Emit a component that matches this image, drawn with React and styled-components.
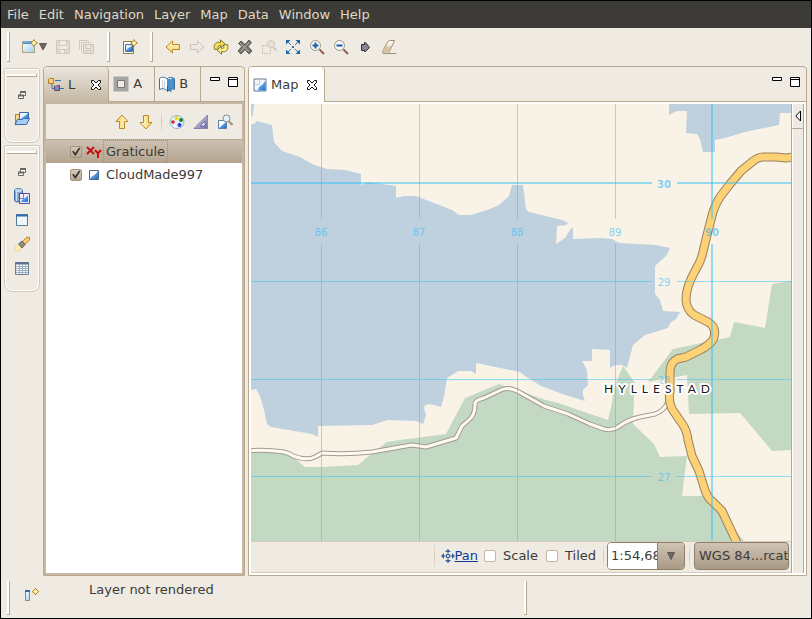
import React from "react";
import styled, { createGlobalStyle } from "styled-components";

const Global = createGlobalStyle`
  *, *::before, *::after { box-sizing: border-box; }
  body { margin: 0; background: #000; }
  button, input { font: inherit; color: inherit; }
  button { border: 0; padding: 0; background: none; }
  svg { display: block; flex: none; }
`;

const line = "#b8a88f";
const frame = "#c5b7a4";
const paper = "#efebe3";

/* ---------- window ---------- */
const Window = styled.div`
  min-height: 100vh;
  display: grid;
  grid-template-rows: 27px 38px 1fr 39px;
  border: 1px solid #000;
  background: ${paper};
  color: #3c3b37;
  font: 13px/16px "DejaVu Sans", sans-serif;
`;
const MenuBar = styled.nav`
  display: flex;
  align-items: center;
  gap: 10px;
  padding: 0 6px;
  background: #3c3b37;
  color: #dfd8c8;
`;
const MenuItem = styled.button``;
const ToolBar = styled.div`
  display: flex;
  align-items: center;
  padding-left: 6px;
`;
const Grip = styled.div`
  width: 3px;
  height: ${(p) => p.$h || 30}px;
  border: solid ${line};
  border-width: 0 1px 1px 0;
  background: linear-gradient(90deg, #fff 2px, ${paper} 2px);
`;
const ToolGroup = styled.div`
  display: flex;
  padding: 0 8px;
`;
const ToolButton = styled.button`
  min-width: 24px;
  height: 24px;
  display: flex;
  align-items: center;
  justify-content: center;
  gap: 1px;
`;
const WideToolButton = styled(ToolButton)`
  width: 33px;
`;
const Workbench = styled.main`
  display: flex;
  gap: 3px;
  padding: 0 4px 3px 3px;
  min-height: 0;
`;
const Trim = styled.aside`
  flex: 0 0 36px;
  display: flex;
  flex-direction: column;
  gap: 2px;
  padding-top: 2px;
`;
const TrimStack = styled.div`
  display: flex;
  flex-direction: column;
  align-items: center;
  padding: 5px 2px 11px;
  border: 1px solid #d3c9b8;
  border-radius: 2px 2px 8px 8px;
  box-shadow: inset 0 0 0 1px #fff;
`;
const TrimHandle = styled.div`
  width: 30px;
  height: 3px;
  margin-bottom: 6px;
  border: solid ${line};
  border-width: 0 1px 1px 0;
  background: #fff;
`;

/* ---------- panels ---------- */
const Panel = styled.section`
  flex: ${(p) => (p.$grow ? "1 1 0" : "0 0 202px")};
  min-width: 0;
  display: flex;
  flex-direction: column;
  border: 1px solid ${line};
  border-radius: 4px 4px 0 0;
`;
const TabStrip = styled.header`
  height: 35px;
  display: flex;
  flex: none;
  border-bottom: 1px solid ${line};
`;
const Tab = styled.div`
  display: flex;
  align-items: center;
  gap: ${(p) => p.$gap || 0}px;
  padding: 0 ${(p) => p.$right || 12}px 0 4px;
  border-right: 1px solid ${line};
  ${(p) =>
    p.$fill &&
    `margin-bottom: -1px; background: ${p.$fill}; border-radius: 3px 4px 0 0;`}
`;
const TabButton = styled.button`
  display: flex;
  align-items: center;
  gap: 4px;
`;
const WindowButtons = styled.div`
  margin-left: auto;
  display: flex;
  gap: 8px;
  padding: 9px 6px 0 0;
  align-items: flex-start;
`;
const PanelBody = styled.div`
  flex: 1;
  min-height: 0;
  display: flex;
  flex-direction: ${(p) => (p.$row ? "row" : "column")};
  border: 2px solid ${(p) => p.$edge};
  background: #fff;
`;
const ViewToolBar = styled.div`
  height: 35px;
  flex: none;
  display: flex;
  align-items: center;
  justify-content: flex-end;
  padding-right: 5px;
  background: ${paper};
`;
const Divider = styled.div`
  width: 1px;
  height: ${(p) => p.$h || 20}px;
  margin: 0 ${(p) => p.$gap || 3}px;
  background: linear-gradient(#e9e3d9, #d0c6b7, #e9e3d9);
`;
const LayerList = styled.ul`
  list-style: none;
  margin: 0;
  padding: 0;
  border-top: 1px solid ${line};
`;
const LayerRow = styled.li`
  height: 23px;
  display: flex;
  align-items: center;
  gap: 4px;
  padding-left: 24px;
  background: ${(p) => (p.$selected ? "linear-gradient(#cdc1b2, #b3a48f)" : "#fff")};
`;
const LayerLabel = styled.label`
  height: 100%;
  display: flex;
  align-items: center;
  padding: 0 2px;
  margin-left: -3px;
  border: 1px dotted ${(p) => (p.$selected ? "#f5694e" : "transparent")};
`;
const Check = styled.input`
  appearance: none;
  width: 12px;
  height: 12px;
  margin: 0;
  flex: none;
  border: 1px solid #c3b7a6;
  border-radius: 2px;
  background: #fff;
  display: grid;
  &:checked {
    border-color: #a3937d;
    background: linear-gradient(#d6cabb, #b6a793);
  }
  &:checked::after {
    content: "";
    background: #353430;
    clip-path: polygon(12% 50%, 24% 42%, 42% 66%, 80% 10%, 94% 18%, 48% 90%, 38% 90%);
  }
`;

/* ---------- map ---------- */
const MapColumn = styled.div`
  flex: 1;
  min-width: 0;
  display: flex;
  flex-direction: column;
`;
const MapView = styled.div`
  flex: 1;
  min-height: 0;
  overflow: hidden;
  background: #f8f3e6;
  contain: size;
`;
const Palette = styled.div`
  flex: 0 0 13px;
  background: ${paper};
  border: solid ${line};
  border-width: 0 1px;
  box-shadow: inset 1px 0 #fff;
`;
const PaletteButton = styled.button`
  width: 100%;
  height: 25px;
  display: grid;
  place-items: center;
  border-bottom: 1px solid ${line};
`;
const MapFooter = styled.div`
  height: 32px;
  flex: none;
  display: flex;
  align-items: center;
  justify-content: flex-end;
  padding: 0 2px 2px 0;
  background: ${paper};
  border: solid #d5cbbb;
  border-width: 1px 0;
`;
const PanLink = styled.a`
  display: flex;
  align-items: center;
  margin-right: 6px;
  color: #0a3c9c;
`;
const Option = styled.label`
  display: flex;
  align-items: center;
  gap: 7px;
  margin-right: ${(p) => p.$right}px;
`;
const Combo = styled.div`
  width: 78px;
  height: 28px;
  display: flex;
  flex: none;
  overflow: hidden;
  border: 1px solid #8f806c;
  border-radius: 4px;
`;
const ComboField = styled.input`
  width: 49px;
  border: 0;
  outline: 0;
  padding: 0 0 0 3px;
  background: #fff;
`;
const ComboArrow = styled.button`
  flex: 1;
  display: grid;
  place-items: center;
  border-left: 1px solid #8f806c;
  background: linear-gradient(#cfc3b4, #a99a86);
`;
const CrsButton = styled.button`
  width: 95px;
  height: 28px;
  flex: none;
  display: flex;
  align-items: center;
  padding: 0 0 0 4px;
  border: 1px solid #8f806c;
  border-radius: 4px;
  background: linear-gradient(#cfc3b4, #a99a86);
`;
const CrsText = styled.span`
  overflow: hidden;
  white-space: nowrap;
`;

/* ---------- status ---------- */
const StatusBar = styled.footer`
  display: flex;
  align-items: flex-start;
  padding: 2px 6px;
`;
const StatusButton = styled.button`
  padding: 6px 14px 0;
`;
const StatusText = styled.output`
  flex: 0 0 470px;
  padding: 1px 0 0 35px;
`;

/* ---------- icons ---------- */
const Svg = ({ w = 16, h = 16, children }) => (
  <svg width={w} height={h} viewBox={`0 0 ${w} ${h}`} fill="none" aria-hidden="true">
    {children}
  </svg>
);
const Spark = ({ x, y }) => (
  <path
    transform={`translate(${x} ${y})`}
    d="M3.5 0L4.800 2.200 7 3.500 4.800 4.800 3.500 7 2.200 4.800 0 3.500 2.200 2.200z"
    stroke="#b28a1c"
    fill="#fff6c8"
  />
);
const Gradients = () => (
  <svg width="0" height="0" aria-hidden="true">
    <defs>
      <linearGradient id="gold" x2="0" y2="1"><stop stopColor="#fffbe0" /><stop offset="1" stopColor="#f5cf56" /></linearGradient>
      <linearGradient id="sky" x2="1" y2="1"><stop stopColor="#fff" /><stop offset="1" stopColor="#9fd0ef" /></linearGradient>
      <linearGradient id="sea" x2="1" y2="1"><stop stopColor="#8ccbff" /><stop offset="1" stopColor="#1b6fd0" /></linearGradient>
      <linearGradient id="silver" x2="1" y2="1"><stop stopColor="#f1f0f8" /><stop offset="1" stopColor="#6a69a0" /></linearGradient>
      <linearGradient id="rubber" x2="0" y2="1"><stop stopColor="#fff" /><stop offset="1" stopColor="#e1cdb8" /></linearGradient>
    </defs>
  </svg>
);
const Wizard = () => (
  <Svg>
    <path d="M.5 2.500h12v11H.5z" fill="url(#sky)" stroke="#b0a074" />
    <path d="M1 2h8v3H1z" fill="#4a86c8" />
    <path d="M1 3h7" stroke="#a5caf0" />
    <Spark x={8.5} y={0.5} />
  </Svg>
);
const DropArrow = () => (
  <Svg w={8} h={16}><path d="M.5 4.500h7L4 11z" fill="#6d6860" stroke="#5d5850" /></Svg>
);
const Save = () => (
  <Svg>
    <path d="M1.500 1.500h13v13h-13zM4.500 1.500v5h7v-5M4.500 14.500v-4h7v4M9.500 11v3" stroke="#cfcac1" />
    <path d="M2 2h2v12H2zM12 2h2v12h-2z" fill="#dfdad1" />
  </Svg>
);
const SaveAll = () => (
  <Svg>
    <path d="M.5 10.500v-9h9v1M2.500 12.500v-9h9v1" stroke="#cfcac1" />
    <path d="M4.500 5.500h10v9h-10zM7 5.500v4h5v-4M7 14.500v-3h5v3" stroke="#cbc6bd" fill="#e7e2d9" />
  </Svg>
);
const NewMap = () => (
  <Svg>
    <path d="M1.500 2.500h10v12h-10z" fill="#fff" stroke="#8f7c3e" />
    <path d="M3.500 5.500h7v7h-7z" fill="#e3effa" stroke="#4b6f9b" />
    <path d="M10 6v6H4c1-4 4-2 6-6z" fill="url(#sea)" />
    <Spark x={8.5} y={0.5} />
  </Svg>
);
const ArrowIcon = ({ turn = 0, off }) => (
  <Svg>
    <path
      transform={`rotate(${turn} 8 8)`}
      d="M1 8l6.500-6v3.500h7v5h-7V14z"
      fill={off ? "#eeeae3" : "url(#gold)"}
      stroke={off ? "#c9c4ba" : "#bb8a26"}
    />
  </Svg>
);
const Refresh = () => (
  <Svg>
    <path d="M1.500 10.500C0 5 3 2.500 7.500 3.500V.8l4.500 4-4.500 4V6.500C5.500 6 4.500 7.500 5.500 10z" fill="#f7e14c" stroke="#857736" />
    <path d="M14.500 5.500c1.500 5.500-1.500 8-6 7v2.700l-4.500-4 4.500-4v2.300c2 .5 3-1 2-3.500z" fill="#fbf08a" stroke="#857736" />
  </Svg>
);
const StopX = () => (
  <Svg>
    <path d="M1.500 4.500L4 2l4 3.500L12 1l2.500 2.500-3.500 4 4 4.500-3 3-4-4.500L4 15l-3-3 4-4.500z" fill="#77746e" stroke="#5a5853" />
    <path d="M3 4.500l9 8M12.500 3L3.500 12.500" stroke="#b7b4ae" />
  </Svg>
);
const ZoomSel = () => (
  <Svg>
    <path d="M1.500 6.500h8v8h-8z" stroke="#c8c3b9" strokeDasharray="2 1" />
    <path d="M12 8l3.500 3.500" stroke="#cfcac1" strokeWidth="2" />
    <circle cx="10" cy="5" r="3.500" fill="#e6e2da" stroke="#cfcac1" />
  </Svg>
);
const Extent = () => (
  <Svg>
    <path d="M2 2l12 12M14 2L2 14" stroke="#2a6cb0" strokeDasharray="5.500 1.500 3 1.500" />
    <path d="M1 1h4.500L1 5.500zM15 1v4.500L10.500 1zM1 15v-4.500L5.500 15zM15 15h-4.500l4.500-4.500z" fill="#1f66ad" />
  </Svg>
);
const Magnify = ({ plus }) => (
  <Svg>
    <path d="M10.500 10.500l4.500 4.500" stroke="#8f5d50" strokeWidth="2" />
    <circle cx="6.500" cy="6.500" r="5" fill="#f2f8fd" stroke="#9a9a78" />
    <path d={plus ? "M6.500 3.500v6M3.500 6.500h6" : "M3.500 6.500h6"} stroke="#1d5ca6" strokeWidth="2" />
  </Svg>
);
const Tag = () => (
  <Svg><path d="M4.500 5.500h3v-2h1l4 5-4 4h-1v-1h-3z" fill="#85858f" stroke="#2e2e3c" /></Svg>
);
const Eraser = () => (
  <Svg>
    <path d="M1.500 12.500L7 2.500l1.500-1h5L8 13.500l-1 1H2z" fill="url(#rubber)" stroke="#a28e74" />
    <path d="M4.500 7.500h6L8 13.500H1.500z" fill="#d9c1a8" />
    <path d="M7 14.500h8.500" stroke="#a28e74" />
  </Svg>
);
const LayersIcon = () => (
  <Svg>
    <path d="M4 6v5.500h3M7 3.500h6M12 11.500h4" stroke="#2d74b5" />
    <path d="M.5 2.500c0-1 1-1 1.500-1h3.500v5h-5z" fill="#f9cf72" stroke="#b27b24" />
    <path d="M6.500 8.500h5v5h-5z" fill="#8a86b8" stroke="#57506b" />
    <path d="M6 8.500h3" stroke="#d6a75c" />
  </Svg>
);
const Close = () => (
  <Svg w={12} h={12}>
    <path d="M1.500 1.500h2L6 4l2.500-2.500h2v2L8 6l2.500 2.500v2h-2L6 8l-2.500 2.500h-2v-2L4 6 1.500 3.500z" fill="#fff" stroke="#111" />
  </Svg>
);
const AreaIcon = () => (
  <Svg>
    <path d="M2.500 2.500h11v11h-11z" fill="#efebe3" stroke="#a5a5a5" strokeWidth="4" />
    <path d="M4.500 4.500h7v7h-7z" stroke="#777" />
  </Svg>
);
const Book = () => (
  <Svg>
    <path d="M.5 2.500C3 .5 6 1 8 3c1.500-2 5-2 7.500-.5v11C12 12 9.500 12.500 8 14.500 6 12.500 3 12 .5 13.500z" fill="#fff" stroke="#3c6f9d" />
    <path d="M3.500 4v8M5.500 4.500v8" stroke="#c3d1dd" />
    <path d="M8 3h3.500v10.500l-3.500 1zM12.500 2h2.500v11h-2.500z" fill="#3f90d4" />
    <path d="M8.500 10v5.500l1.500-1.500 2 1.500V3" stroke="#1d5f9f" />
  </Svg>
);
const Minimize = () => <Svg w={10} h={12}><path d="M.5 1.500h9v3h-9z" fill="#fff" stroke="#000" /></Svg>;
const Maximize = () => <Svg w={10} h={12}><path d="M.5 1.500h9v9h-9zM.5 3.500h9" fill="#fff" stroke="#000" /></Svg>;
const MapIcon = () => (
  <Svg w={14} h={16}>
    <path d="M1 2h12v12H1z" fill="#f5f8fb" stroke="#65768c" />
    <path d="M6.500 2v5M2 7.500h4" stroke="#b9c6d4" />
    <path d="M12.500 4v9.500H5c.5-4 2.500-5 4-5.500s1.500-3 3.500-4z" fill="url(#sea)" />
  </Svg>
);
const PaletteIcon = () => (
  <Svg>
    <ellipse cx="8" cy="8" rx="7" ry="6.500" fill="#e5f0fa" stroke="#8fb4d6" />
    <circle cx="7.500" cy="4" r="2" fill="#f2dc00" /><circle cx="4" cy="8" r="1.800" fill="#e02020" />
    <circle cx="12" cy="6" r="2" fill="#188a28" /><circle cx="10.500" cy="11" r="2" fill="#2a3fd0" />
    <circle cx="6" cy="12" r="1.500" fill="#fff" />
  </Svg>
);
const Triangle = () => (
  <Svg>
    <path d="M14.500 1v13.500H1z" fill="url(#silver)" stroke="#8583b4" />
    <path d="M12 7v5H7z" fill="#f6f4f8" stroke="#6664a0" />
  </Svg>
);
const ZoomLayer = () => (
  <Svg>
    <path d="M1.500 6.500h8v8h-8z" fill="#fff" stroke="#5c7ea3" />
    <path d="M9 8v6H2z" fill="url(#sea)" />
    <path d="M11.500 7l4 4" stroke="#a3937d" strokeWidth="2" />
    <circle cx="9.500" cy="4.500" r="3.500" fill="#e6f0f7" stroke="#868c92" />
  </Svg>
);
const Restore = () => (
  <Svg>
    <path d="M6.500 4.500h5v4h-5z" fill="#fff" stroke="#6c675f" /><path d="M6 5h6" stroke="#6c675f" strokeWidth="2" />
    <path d="M4.500 8.500h5v3h-5z" fill="#fff" stroke="#6c675f" /><path d="M4 8.500h6" stroke="#6c675f" strokeWidth="2" />
  </Svg>
);
const Folder = () => (
  <Svg>
    <path d="M1.500 13.500v-10h3l1 1h7v6" fill="#f7d98d" stroke="#a78338" />
    <path d="M5.500 1.500h9v8h-9z" fill="#eaf4fd" stroke="#3c6faa" />
    <path d="M14 2v7H7c1-4 4-3 7-7z" fill="url(#sea)" />
    <path d="M1 13.500l2.500-5h5l1-1h6l-3 6z" fill="#a9cdf2" stroke="#3c6faa" />
  </Svg>
);
const Catalog = () => (
  <Svg>
    <path d="M.5 2.500c0-2.500 8-2.500 8 0v10c0 2-8 2-8 0z" fill="#7fa8d8" stroke="#3e6aa3" />
    <path d="M2.500 3v10" stroke="#d5e5f7" /><ellipse cx="4.500" cy="2.500" rx="3.500" ry="1.500" fill="#c5daf1" />
    <path d="M5.500 5.500h10v10h-10z" fill="#f1eefa" stroke="#5a49a5" />
    <path d="M14 7v7H7c1-4 5-3 7-7z" fill="url(#sea)" /><path d="M9.500 6v5M6 10.500h4" stroke="#8b7fc2" />
  </Svg>
);
const ViewIcon = () => (
  <Svg><path d="M2.500 2.500h11v11h-11z" fill="#eef8fc" stroke="#587b95" /><path d="M2 3.500h12" stroke="#2e6fae" strokeWidth="2" /></Svg>
);
const Torch = () => (
  <Svg>
    <path d="M1 11l4-3 3 3-3 4H1z" fill="#fff0b0" stroke="#e9d9a0" />
    <path d="M8 6l5-5 2.500.5V4l-5 5z" fill="#f9c672" stroke="#c58628" />
    <path d="M4.500 8L8 5l3 3.500-3 3.500z" fill="#928b83" stroke="#6b645c" />
  </Svg>
);
const Table = () => (
  <Svg>
    <path d="M1.500 2.500h13v12h-13z" fill="#f6f9fc" stroke="#6c7f95" />
    <path d="M1 3.500h14" stroke="#58708f" strokeWidth="2" />
    <path d="M2 6.500h12M2 8.500h12M2 10.500h12M2 12.500h12M5.500 4v10M8.500 4v10M11.500 4v10" stroke="#9fafc2" />
  </Svg>
);
const Graticule = () => (
  <Svg>
    <path d="M1 3l7 7M8 3l-7 7M9 6l3 3.500L15 6M12 9v5" stroke="#c80d0d" strokeWidth="2" />
  </Svg>
);
const TileIcon = () => (
  <Svg><path d="M3.500 3.500h9v9h-9z" fill="#fff" stroke="#4e6781" /><path d="M12 4v8H4c2-4 5-3 8-8z" fill="url(#sea)" /></Svg>
);
const PanIcon = () => (
  <Svg w={14} h={14}>
    <path d="M7 2v10M2 7h10" stroke="#386697" />
    <path d="M7 0l3 3H4zM7 14l-3-3h6zM0 7l3-3v6zM14 7l-3 3V4z" fill="#386697" />
    <path d="M5.500 5.500h3v3h-3z" fill="#d8e4ee" stroke="#386697" />
  </Svg>
);
const StatusIcon = () => (
  <Svg>
    <path d="M1.500 3.500h4v10h-4z" fill="url(#sky)" stroke="#8e8a70" /><path d="M1 4h5" stroke="#2e69b0" strokeWidth="2" />
    <Spark x={8} y={1} />
  </Svg>
);

/* ---------- chart of the fjord ---------- */
const verticals = [[321, "86"], [419, "87"], [517, "88"], [615, "89"], [712, "90"]];
const horizontals = [[183, "30"], [281, "29"], [379, "28"], [476, "27"]];
const highway =
  "M793 157L786 158 776 157 763 157Q758 157 752 162L741 171 730 184 720 197Q716 203 713 212L707 235 702 256Q700 263 695 271 686 287 686 299 686 309 694 315L708 322Q718 328 713 340 709 345 702 349L686 357 677 359Q670 363 670 372L670 392Q668 400 672 409L683 425Q687 431 688 440L692 456 699 471 704 487Q707 498 713 502L722 511 737 543";
const lane =
  "M250 451Q262 449 284 452 289 453 293 456 307 461 315 457L322 453Q345 455 372 452L400 447 412 445 426 447 456 438 462 426 471 418Q475 413 475 404 475 400 484 398L501 390Q509 386 519 392L544 406 568 414 590 424 604 429Q612 431 618 427 627 420 640 417L655 414Q664 411 668 402";

const FjordMap = () => (
  <svg width="100%" height="100%" viewBox="251 104 540 438" preserveAspectRatio="xMinYMin slice" role="img" aria-label="Hyllestad map">
    <path fill="#f8f3e6" d="M251 104h540v438H251z" />
    <g fill="#bfd0df">
      <path d="M251 104h3l-1 11-2 2z" />
      <path d="M251 124h3l3-3 15 4 2 17 8 9 18 6 12 7 15 5 18 1 16 4v11l7-3 28 4v12l8-2h12l36 14 7 5h12l19-6 9-4 10-9 3-11h11l3 24 3 3 33 8 6 3-2 2-9 1-1 18 9-6 5-8 3-3v12l27-1 12 1 7 4 36 2 15 3-3 7-12 11v28l5 6 3 11 17 1-4 7-6 4-2 5-23 7-12 10-6 23-5-3h-7l-5 3v-18l-18-1v12h-10l5 9 1 15-5 5v5l2 6-20-6-24-9-13-8-8-6-44-9v11l-5-3h-13l-11 7-3 19-3 10-11-3-5 1-1 3 2 7-3 9-7-3-28-1-16 5-54 1v11l-6-3-41-7-4-3-3-14-4-14-4-7-5 1z" />
      <path d="M669 104v11l8-4h10l-1 22 11 1 3 5 3 13h12v-12l10-2 20-6 34-7 1-12h11v-9z" />
    </g>
    <g fill="#c4d9c4">
      <path d="M251 451l34 1 8 5 12 10h17l36-2 12-10 17-13 13-2 46-6 19-36 34-14 47 16 9 2 53 18 4-17 2-15 9-22 12 17-1 12-1 29 21 20 6 13 27-1-5 40 22 0 42 47H251z" />
      <path d="M648 382l25-33 57-12 4-15 31 6 7-44 19-3v169l-19 1-26-31-6-7-51 1-2-39z" />
    </g>
    <g fill="none" strokeLinejoin="round">
      <path d={lane} stroke="#a39a91" strokeWidth="5" />
      <path d={lane} stroke="#fffaf0" strokeWidth="3" />
      <path d={highway} stroke="#96805f" strokeWidth="9" />
      <path d={highway} stroke="#fdd277" strokeWidth="7" />
    </g>
    <g stroke="#32c0f8" strokeOpacity=".5" fill="none" shapeRendering="crispEdges">
      {verticals.map(([x]) => (
        <path key={x} d={`M${x} 104V219M${x} 244V542`} strokeWidth={x === 712 ? 2 : 1} transform={x === 712 ? undefined : "translate(.5 0)"} />
      ))}
      {horizontals.map(([y]) => (
        <path key={y} d={`M251 ${y}H652M677 ${y}H791`} strokeWidth={y === 183 ? 2 : 1} transform={y === 183 ? undefined : "translate(0 .5)"} />
      ))}
    </g>
    <g fill="#32b8f8" fillOpacity=".6" fontFamily="DejaVu Sans, sans-serif" fontSize="10" textAnchor="middle">
      {verticals.map(([x, t]) => (
        <text key={t} x={x} y="236" fontWeight={t === "90" ? 700 : 400}>{t}</text>
      ))}
      {horizontals.map(([y, t]) => (
        <text key={t} x="664" y={y + 5} fontWeight={t === "30" ? 700 : 400}>{t}</text>
      ))}
    </g>
    <text x="604" y="393" fontFamily="Lato, sans-serif" fontSize="12" letterSpacing="5" fill="#1c1c1c" stroke="#fff" strokeWidth="4" strokeLinejoin="round" paintOrder="stroke">
      HYLLESTAD
    </text>
  </svg>
);

const Tool = ({ name, children }) => <ToolButton aria-label={name}>{children}</ToolButton>;
const menus = ["File", "Edit", "Navigation", "Layer", "Map", "Data", "Window", "Help"];

const Controls = () => (
  <WindowButtons>
    <button aria-label="Minimize"><Minimize /></button>
    <button aria-label="Maximize"><Maximize /></button>
  </WindowButtons>
);

export default function App() {
  return (
    <>
      <Global />
      <Window>
        <MenuBar>
          {menus.map((m) => <MenuItem key={m}>{m}</MenuItem>)}
        </MenuBar>
        <ToolBar>
          <Grip />
          <ToolGroup>
            <WideToolButton aria-label="New"><Wizard /><DropArrow /></WideToolButton>
            <Tool name="Save"><Save /></Tool>
            <Tool name="Save all"><SaveAll /></Tool>
          </ToolGroup>
          <Grip />
          <ToolGroup>
            <Tool name="New map"><NewMap /></Tool>
          </ToolGroup>
          <Grip />
          <ToolGroup>
            <Tool name="Back"><ArrowIcon /></Tool>
            <Tool name="Forward"><ArrowIcon turn={180} off /></Tool>
            <Tool name="Refresh"><Refresh /></Tool>
            <Tool name="Stop"><StopX /></Tool>
            <Tool name="Zoom to selection"><ZoomSel /></Tool>
            <Tool name="Show all"><Extent /></Tool>
            <Tool name="Zoom in"><Magnify plus /></Tool>
            <Tool name="Zoom out"><Magnify /></Tool>
            <Tool name="Commit"><Tag /></Tool>
            <Tool name="Clear"><Eraser /></Tool>
          </ToolGroup>
        </ToolBar>
        <Workbench>
          <Trim>
            <TrimStack>
              <TrimHandle />
              <Tool name="Restore"><Restore /></Tool>
              <Tool name="Projects"><Folder /></Tool>
            </TrimStack>
            <TrimStack>
              <TrimHandle />
              <Tool name="Restore views"><Restore /></Tool>
              <Tool name="Catalog"><Catalog /></Tool>
              <Tool name="View"><ViewIcon /></Tool>
              <Tool name="Search"><Torch /></Tool>
              <Tool name="Table"><Table /></Tool>
            </TrimStack>
          </Trim>
          <Panel>
            <TabStrip>
              <Tab $fill={`linear-gradient(#ece6de, ${frame})`} $gap={15} $right={6}>
                <TabButton role="tab" aria-selected="true"><LayersIcon />L</TabButton>
                <button aria-label="Close layers"><Close /></button>
              </Tab>
              <Tab><TabButton role="tab"><AreaIcon />A</TabButton></Tab>
              <Tab><TabButton role="tab"><Book />B</TabButton></Tab>
              <Controls />
            </TabStrip>
            <PanelBody $edge={frame}>
              <ViewToolBar>
                <Tool name="Move up"><ArrowIcon turn={90} /></Tool>
                <Tool name="Move down"><ArrowIcon turn={-90} /></Tool>
                <Divider />
                <Tool name="Style"><PaletteIcon /></Tool>
                <Tool name="Measure"><Triangle /></Tool>
                <Tool name="Zoom to layer"><ZoomLayer /></Tool>
              </ViewToolBar>
              <LayerList>
                <LayerRow $selected>
                  <Check id="graticule" type="checkbox" defaultChecked />
                  <Graticule />
                  <LayerLabel htmlFor="graticule" $selected>Graticule</LayerLabel>
                </LayerRow>
                <LayerRow>
                  <Check id="cloudmade" type="checkbox" defaultChecked />
                  <TileIcon />
                  <LayerLabel htmlFor="cloudmade">CloudMade997</LayerLabel>
                </LayerRow>
              </LayerList>
            </PanelBody>
          </Panel>
          <Panel $grow>
            <TabStrip>
              <Tab $fill="#fff" $gap={8} $right={6}>
                <TabButton role="tab" aria-selected="true"><MapIcon />Map</TabButton>
                <button aria-label="Close map"><Close /></button>
              </Tab>
              <Controls />
            </TabStrip>
            <PanelBody $edge="#fff" $row>
              <MapColumn>
                <MapView><FjordMap /></MapView>
                <MapFooter>
                  <Divider $h={24} $gap={6} />
                  <PanLink href="#pan"><PanIcon />Pan</PanLink>
                  <Option $right={8}><Check type="checkbox" />Scale</Option>
                  <Option $right={4}><Check type="checkbox" />Tiled</Option>
                  <Divider $h={24} $gap={3} />
                  <Combo>
                    <ComboField aria-label="Scale" defaultValue="1:54,687" />
                    <ComboArrow aria-label="Choose scale">
                      <Svg w={8} h={8}><path d="M.5.5h7L4 7.500z" fill="#6d6860" stroke="#5f594f" /></Svg>
                    </ComboArrow>
                  </Combo>
                  <Divider $h={24} $gap={4} />
                  <CrsButton><CrsText>WGS 84...rcat</CrsText></CrsButton>
                </MapFooter>
              </MapColumn>
              <Palette>
                <PaletteButton aria-label="Show palette">
                  <Svg w={6} h={12}><path d="M5.500 1v10L.8 6z" fill="#fff" stroke="#000" /></Svg>
                </PaletteButton>
              </Palette>
            </PanelBody>
          </Panel>
        </Workbench>
        <StatusBar>
          <Grip $h={34} />
          <StatusButton aria-label="Show view"><StatusIcon /></StatusButton>
          <StatusText>Layer not rendered</StatusText>
          <Grip $h={34} />
        </StatusBar>
      </Window>
      <Gradients />
    </>
  );
}
